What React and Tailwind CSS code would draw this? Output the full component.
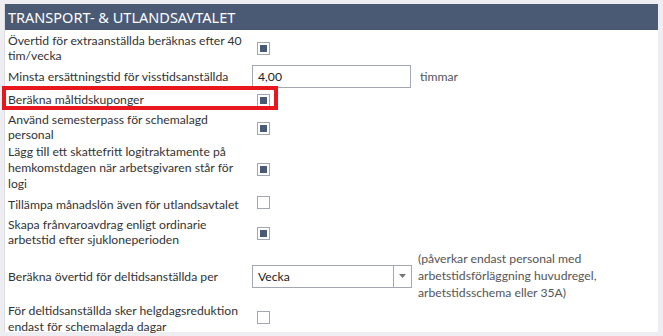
import React from 'react'

const font = { fontFamily: 'Lato, "Noto Sans", sans-serif' }
const headFont = { fontFamily: '"Noto Sans", Lato, sans-serif' }

function Check({ on }) {
  return (
    <span className="inline-flex h-[13px] w-[13px] items-center justify-center border border-[#a3a7b3] bg-white">
      {on && <span className="block h-[7px] w-[7px] bg-[#4a5a75]"></span>}
    </span>
  )
}

function Row({ label, children, className = '', extra }) {
  return (
    <div className={`flex items-center ${className}`}>
      <div className="w-[247px] shrink-0 pl-[3px] text-[#333]">{label}</div>
      <div className="flex w-[160px] shrink-0 items-center">{children}</div>
      {extra}
    </div>
  )
}

export default function App() {
  return (
    <div className="h-[336px] w-[663px] bg-[#ededf2] pl-[4px] pr-[5px] pt-[4px] pb-[4px] text-[12.2px] leading-[15px]" style={font}>
      <div className="h-full border-l border-[#dcdce3] bg-white">
        {/* Header */}
        <div className="flex h-[26px] items-center bg-[#4a5a75] pl-[3px] text-[14.5px] text-white" style={headFont}>
          TRANSPORT- &amp; UTLANDSAVTALET
        </div>

        <Row className="h-[34px] pt-[1px]" label={<>Övertid för extraanställda beräknas efter 40 tim/vecka</>}>
          <span className="pl-[5px]"><Check on /></span>
        </Row>

        <Row className="h-[24px]" label="Minsta ersättningstid för visstidsanställda"
          extra={<span className="pl-[8px] text-[#555]">timmar</span>}>
          <div className="flex h-[23px] w-[159px] items-center border border-[#a3a7b3] pl-[5px] text-[#222]">4,00</div>
        </Row>

        {/* Highlighted row */}
        <div className="relative">
          <Row className="h-[22px]" label="Beräkna måltidskuponger">
            <span className="pl-[5px]"><Check on /></span>
          </Row>
          <div className="pointer-events-none absolute left-[-3px] top-[-2px] h-[24px] w-[276px] border-[4px] border-[#e8161d]"></div>
        </div>

        <Row className="h-[33px] pt-[1px]" label="Använd semesterpass för schemalagd personal">
          <span className="pl-[5px]"><Check on /></span>
        </Row>

        <Row className="h-[50px] [&>div:first-child]:leading-[16px]" label="Lägg till ett skattefritt logitraktamente på hemkomstdagen när arbetsgivaren står för logi">
          <span className="pl-[5px]"><Check on /></span>
        </Row>

        <Row className="h-[22px]" label="Tillämpa månadslön även för utlandsavtalet">
          <span className="pl-[5px]"><Check /></span>
        </Row>

        <Row className="h-[34px]" label="Skapa frånvaroavdrag enligt ordinarie arbetstid efter sjukloneperioden">
          <span className="pl-[5px]"><Check on /></span>
        </Row>

        <Row className="h-[54px]" label="Beräkna övertid för deltidsanställda per"
          extra={<div className="pl-[6px] pb-[2px] leading-[17px] text-[#555]">(påverkar endast personal med arbetstidsförläggning huvudregel, arbetstidsschema eller 35A)</div>}>
          <div className="flex h-[23px] w-[160px] items-center border border-[#a3a7b3] text-[#222]">
            <span className="flex-1 pl-[5px]">Vecka</span>
            <span className="flex h-full w-[18px] items-center justify-center border-l border-[#a3a7b3]">
              <svg width="7" height="4" viewBox="0 0 7 4"><path d="M0 0h7L3.5 4z" fill="#777" /></svg>
            </span>
          </div>
        </Row>

        <Row className="h-[32px] [&>div:first-child]:leading-[16px]" label="För deltidsanställda sker helgdagsreduktion endast för schemalagda dagar">
          <span className="pl-[5px]"><Check /></span>
        </Row>
      </div>
    </div>
  )
}
